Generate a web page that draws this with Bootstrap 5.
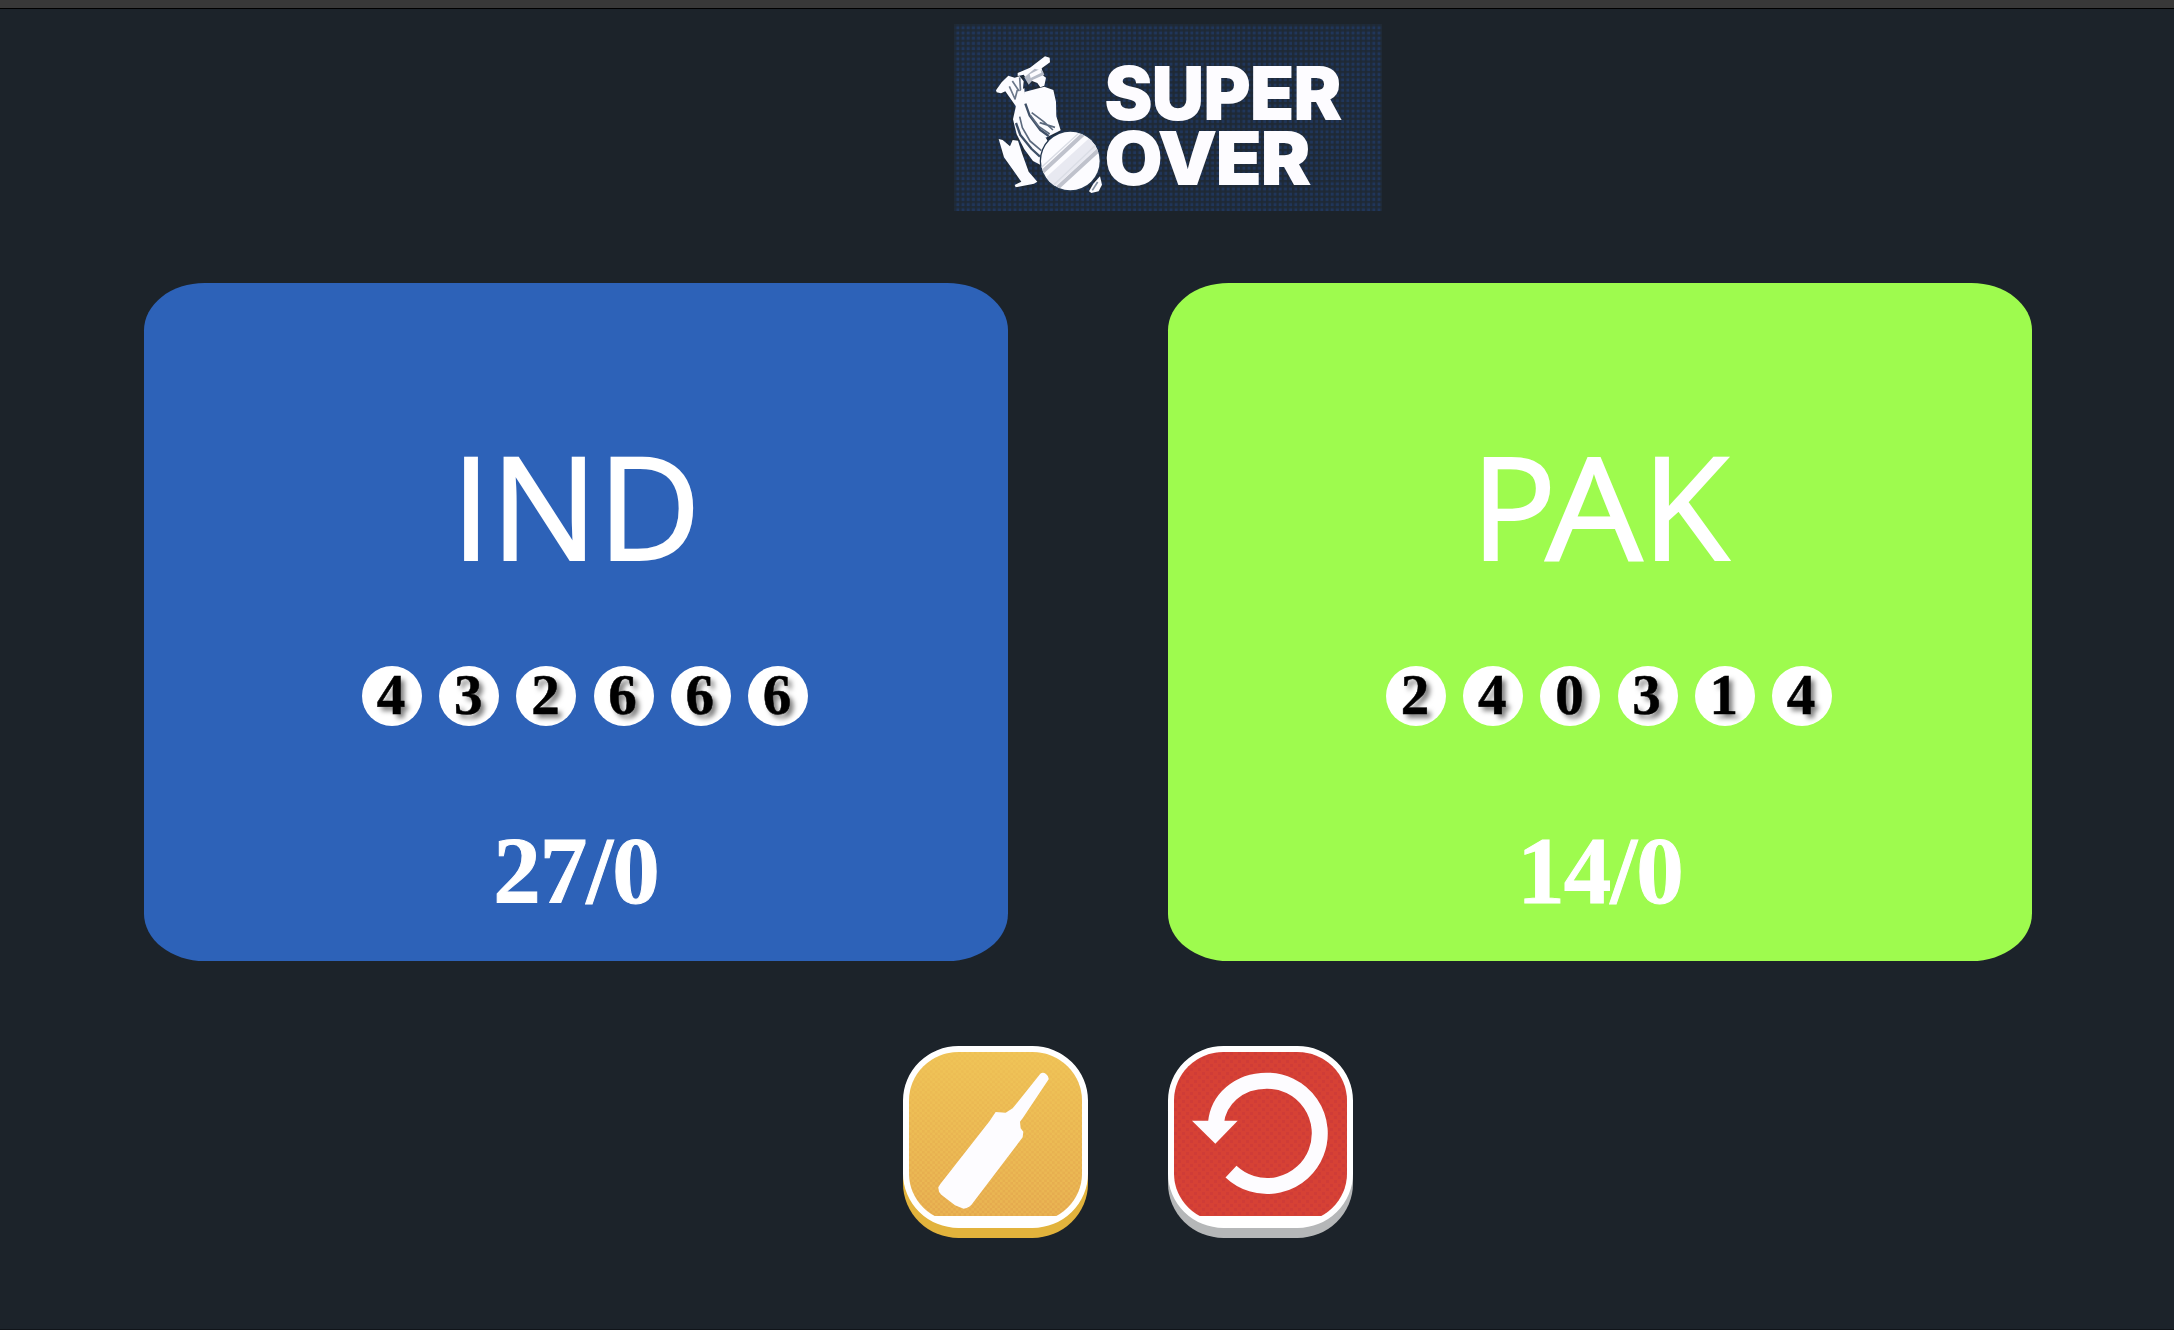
<!DOCTYPE html>
<html lang="en">
<head>
<meta charset="utf-8">
<meta name="viewport" content="width=device-width, initial-scale=1">
<title>Super Over</title>
<link href="https://cdn.jsdelivr.net/npm/bootstrap@5.3.0/dist/css/bootstrap.min.css" rel="stylesheet">
<style>
body{background:#1c232a;font-family:"Liberation Serif",serif;height:1330px;overflow:hidden;border-bottom:1px solid #101419}
.top-strip{height:9px;background:#383838;border-bottom:1px solid #000}
.brand-row{padding:15px 0 72px 954px;line-height:0}
.board{gap:160px;padding-left:144px}
.team{width:864px;height:678px;border-radius:7%;color:#fff}
.team-ind{background:#2d62b8}
.team-pak{background:#9efb4e}
.team-name{font:400 142px/180px "Open Sans",sans-serif;margin-top:132px;-webkit-text-stroke:2px #fff}
.wide-a{display:inline-block;transform:scaleX(1.08);margin:0 3px 0 -7px}
.balls{gap:17.2px;margin:71px 0 0 18px}
.ball{width:60px;height:60px;background:#fff;color:#000;font-size:57px;font-weight:700;line-height:58px;text-shadow:4px 4px 5px rgba(0,0,0,.5);padding-right:2px;-webkit-text-stroke:.5px #000}
.score{font-size:95px;font-weight:700;line-height:110px;margin-top:90px;letter-spacing:-.8px;-webkit-text-stroke:1px #fff}
.controls{gap:80px;padding:85px 0 0 903px}
.key{width:185px;height:182px;border:6px solid #fff;border-radius:30%;background:#fff;padding:0;overflow:hidden;line-height:0}
.key-bat{box-shadow:0 10px 0 #e2b33c}
.key-reset{box-shadow:0 10px 0 #b5b7b8}
.key svg{display:block}
</style>
</head>
<body>
<div class="top-strip"></div>
<header class="brand-row">
<svg width="428" height="187" viewBox="0 0 428 187" role="img" aria-label="Super Over">
<defs>
<pattern id="weave" width="5.2" height="5.2" patternUnits="userSpaceOnUse"><rect width="5.2" height="5.2" fill="#20365a"/><path d="M0 0h2.4v5.2H0zM0 0h5.2v2.4H0z" fill="#1e2a3a"/><path d="M0 0h2.4v2.4H0z" fill="#1f2933"/></pattern>
<pattern id="gold" width="5.2" height="5.2" patternUnits="userSpaceOnUse"><path d="M0 0h2.6v2.6H0zM2.6 2.6h2.6v2.6H2.6z" fill="#f3d05c" opacity=".28"/></pattern>
<pattern id="rose" width="8" height="8" patternUnits="userSpaceOnUse"><path d="M0 0h3v3H0zM4 4h3v3H4z" fill="#b82b40" opacity=".22"/></pattern>
<linearGradient id="amber" x2="0" y2="1"><stop stop-color="#eec055"/><stop offset="1" stop-color="#e5a94e"/></linearGradient>
<clipPath id="ballclip"><circle cx="271" cy="363" r="88"/></clipPath>
</defs>
<rect width="428" height="187" fill="url(#weave)"/>
<g transform="translate(26 16) scale(.33333)" fill="#fcfcff" stroke-linejoin="round">
<path d="M113 99L150 83l45-34 14 4 1 14-25 18 5 22 8 6-5 24-12 5-9-13-33-13-8-12-18 4z"/>
<path d="M133 112l31-26 24 6 5 12-34 15-13 15z" fill="#b4bac6"/>
<path d="M149 103l32-17 3 12-32 16z"/>
<path d="M48 151l17-24 20-20 19 6 15-4 12 15-5 55 5 22-13 12-42-59-13 6-13-3z"/>
<path d="M88 139l17 38 7-27M97 123l20 30M119 112l5 78" fill="none" stroke="#6b778a" stroke-width="5"/>
<path d="M133 156l60-16 27 10 8 35 1 44 13 42-45 22-27-35-25-25-17-38z"/>
<path d="M106 206l9-49 18-13 3 51 19 42 34 41 14 25-21 72-23-12-26-35-23-45-11-45z"/>
<path d="M136 191l13 36 32 43 25 18M108 249l13 36 34 42 25 23" fill="none" stroke="#3f5067" stroke-width="7"/>
<path d="M119 230l8 33 23 40 34 29M151 226l26 34 32 22M155 218l36 27 28 25M179 248l46 14" fill="none" stroke="#5c6a7e" stroke-width="5"/>
<path d="M56 297l12 3 22 19 8-19 16 2 12 38 20 55 26 30-10 6-55 11-3-7 20-10-52-73z"/>
<path d="M327 454l13-23 20-22 6 25-10 20-22 5z"/>
<path d="M337 451l16-25" stroke="#8491a4" stroke-width="5"/>
<circle cx="271" cy="363" r="92" fill="#23364e"/><circle cx="271" cy="363" r="88"/>
<g clip-path="url(#ballclip)" fill="none"><path d="M205 432L352 299" stroke="#e8e9f1" stroke-width="39"/><path d="M184 399L310 282M231 445L366 321" stroke="#bfc2cc" stroke-width="12"/><path d="M180 386l117-107M220 436l133-126" stroke="#dadde5" stroke-width="4"/></g>
</g>
<g fill="#fdfcff" stroke="#fdfcff" stroke-width="2.2" font-family="Inter,sans-serif" font-weight="800" font-size="71">
<text x="151" y="95" textLength="236" lengthAdjust="spacingAndGlyphs">SUPER</text>
<text x="151" y="160" textLength="205" lengthAdjust="spacingAndGlyphs">OVER</text>
</g>
</svg>
</header>
<main>
<section class="board d-flex">
<div class="team team-ind d-flex flex-column">
<div class="team-name text-center">IND</div>
<div class="balls d-flex justify-content-center">
<div class="ball rounded-circle text-center">4</div><div class="ball rounded-circle text-center">3</div><div class="ball rounded-circle text-center">2</div><div class="ball rounded-circle text-center">6</div><div class="ball rounded-circle text-center">6</div><div class="ball rounded-circle text-center">6</div>
</div>
<div class="score text-center">27/0</div>
</div>
<div class="team team-pak d-flex flex-column">
<div class="team-name text-center">P<span class="wide-a">A</span>K</div>
<div class="balls d-flex justify-content-center">
<div class="ball rounded-circle text-center">2</div><div class="ball rounded-circle text-center">4</div><div class="ball rounded-circle text-center">0</div><div class="ball rounded-circle text-center">3</div><div class="ball rounded-circle text-center">1</div><div class="ball rounded-circle text-center">4</div>
</div>
<div class="score text-center">14/0</div>
</div>
</section>
<div class="controls d-flex">
<button class="key key-bat d-flex align-items-start" type="button" aria-label="Bat">
<svg width="173" height="164" viewBox="0 0 173 164"><rect width="173" height="164" fill="url(#amber)"/><rect width="173" height="164" fill="url(#gold)"/><path transform="scale(.33333) translate(-87 -95)" fill="#fdfcff" d="M481 160q8-6 17 1 9 7 8 16l-77 115-9 12 2 20 8 10-2 17-149 196q-9 15-28 18l-26-10-41-32q-10-9-9-22l6-10 148-189 18-27 30 2 21-13z"/></svg>
</button>
<button class="key key-reset d-flex align-items-start" type="button" aria-label="Reset">
<svg width="173" height="164" viewBox="0 0 173 164"><rect width="173" height="164" fill="#d64135"/><rect width="173" height="164" fill="url(#rose)"/><g transform="scale(.33333) translate(-882 -95)"><path d="M1008 308C1014 238 1075 181 1160 181A158 158 0 1 1 1053 454" fill="none" stroke="#fdfcff" stroke-width="48"/><path d="M936 301h137l-67 69z" fill="#fdfcff"/></g></svg>
</button>
</div>
</main>
<script src="https://cdn.jsdelivr.net/npm/bootstrap@5.3.0/dist/js/bootstrap.bundle.min.js"></script>
</body>
</html>
